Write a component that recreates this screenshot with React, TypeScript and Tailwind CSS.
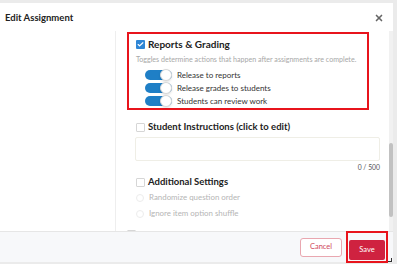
import React from 'react';
import { X, Check } from 'lucide-react';

const Toggle: React.FC<{ label: string }> = ({ label }) => (
  <div className="flex items-center h-[13px]">
    <div className="relative w-[27px] h-[10px] rounded-full bg-[#1f7fc6] shrink-0">
      <div className="absolute right-0 -top-[1px] w-[12px] h-[12px] rounded-full bg-white border border-[#d8d8d8] shadow-sm"></div>
    </div>
    <span className="ml-[5px] text-[8px] text-[#333] whitespace-nowrap">{label}</span>
  </div>
);

const Box: React.FC<{ checked?: boolean }> = ({ checked }) =>
  checked ? (
    <div className="w-[9px] h-[9px] rounded-[1px] bg-[#2f86d6] flex items-center justify-center shrink-0">
      <Check className="w-[7px] h-[7px] text-white" strokeWidth={4} />
    </div>
  ) : (
    <div className="w-[9px] h-[9px] rounded-[1px] border border-[#d6d6d6] bg-white shrink-0"></div>
  );

const Radio: React.FC<{ label: string }> = ({ label }) => (
  <div className="flex items-center h-[16px]">
    <div className="w-[8px] h-[8px] rounded-full border border-[#ececec] shrink-0"></div>
    <span className="ml-[5px] text-[7.9px] text-[#b5b5b5] whitespace-nowrap">{label}</span>
  </div>
);

export default function App() {
  return (
    <div
      className="w-[397px] h-[264px] bg-[#ebebeb] pt-[3px] pr-[4px] overflow-hidden"
      style={{ fontFamily: 'Lato, "Open Sans", sans-serif' }}
    >
      <div className="relative w-[393px] h-[259px] bg-white flex flex-col">
        {/* Header */}
        <div className="h-[28px] flex items-center justify-between pl-[5px] pr-[9px] shrink-0">
          <span className="text-[9.5px] font-bold text-[#222] mt-[2px]">Edit Assignment</span>
          <X className="w-[10px] h-[10px] text-[#666] mt-[2px]" strokeWidth={4} />
        </div>

        {/* Body */}
        <div className="flex flex-1 min-h-0 overflow-hidden">
          <div className="w-[116px] border-r border-[#eeeeee] shrink-0"></div>
          <div className="flex-1 pl-[11px] pr-[9px] pt-[1px] overflow-hidden">
            {/* Highlighted section */}
            <div className="w-[242px] h-[78px] border-2 border-[#e8141c] pl-[7px] pt-[3px]">
              <div className="flex items-center gap-[3px]">
                <Box checked />
                <span className="text-[10px] font-bold text-[#222]">Reports &amp; Grading</span>
              </div>
              <div className="mt-[3px] text-[7.1px] text-[#a8a8a8] whitespace-nowrap">
                Toggles determine actions that happen after assignments are complete.
              </div>
              <div className="mt-[3px] ml-[9px] flex flex-col">
                <Toggle label="Release to reports" />
                <Toggle label="Release grades to students" />
                <Toggle label="Students can review work" />
              </div>
            </div>

            {/* Student instructions */}
            <div className="pl-[9px] mt-[10px]">
              <div className="flex items-center gap-[3px]">
                <Box />
                <span className="text-[9.5px] font-bold text-[#222]">Student Instructions (click to edit)</span>
              </div>
              <div className="mt-[3px] -ml-[1px] h-[24px] border border-[#efeee6] rounded-[2px]"></div>
              <div className="text-right text-[6.8px] text-[#555] mt-[1px]">0 / 500</div>
            </div>

            {/* Additional settings */}
            <div className="pl-[9px] mt-[3px]">
              <div className="flex items-center gap-[3px]">
                <Box />
                <span className="text-[9.5px] font-bold text-[#222]">Additional Settings</span>
              </div>
              <div>
                <Radio label="Randomize question order" />
                <Radio label="Ignore item option shuffle" />
              </div>
            </div>
            <div className="flex items-center gap-[1px] mt-[6px]">
              <Box />
              <span className="text-[9.5px] font-bold text-[#222]">Delete Assignment</span>
            </div>
          </div>
          {/* Scrollbar */}
          <div className="w-[4px] bg-[#f1f1f1] shrink-0 flex flex-col">
            <div className="mt-[112px] h-[74px] rounded-full bg-[#c1c1c1]"></div>
          </div>
        </div>

        {/* Footer */}
        <div className="h-[31px] shrink-0 bg-[#f7f8fa] border-t border-[#e6e6e6] flex items-center justify-end pr-[5px] gap-[4px]">
          <button className="w-[42px] h-[19px] rounded-[3px] border border-[#e9a7b0] bg-white text-[7.5px] text-[#d04a5e]">
            Cancel
          </button>
          <div className="border-2 border-[#e8141c] p-[1px]">
            <button className="w-[36px] h-[20px] rounded-[2px] bg-[#cf2240] text-[7.5px] text-white">
              Save
            </button>
          </div>
        </div>

        {/* Resize corner */}
        <div className="absolute right-[1px] bottom-[0px] w-[4px] h-[4px] border-r border-b border-[#333]"></div>
      </div>
    </div>
  );
}
